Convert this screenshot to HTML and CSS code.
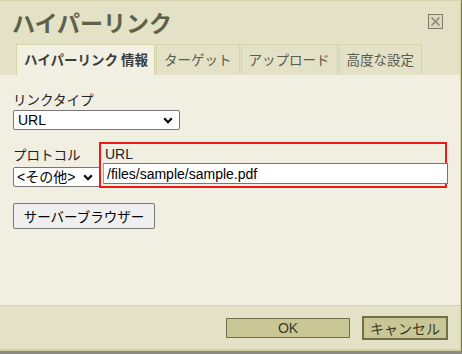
FILE: index.html
```html
<!DOCTYPE html>
<html lang="ja">
<head>
  <meta charset="UTF-8" />
  <meta name="viewport" content="width=device-width, initial-scale=1.0"/>
  <title>ハイパーリンク</title>
  <link rel="stylesheet" href="styles.css">
</head>
<body>
  <div class="dialog">
    <div class="titlebar">
      <span class="title">ハイパーリンク</span>
      <span class="close">
        <svg width="11" height="11" viewBox="0 0 11 11">
          <path d="M1.5 1.5 L9.5 9.5 M9.5 1.5 L1.5 9.5" stroke="#8a8a70" stroke-width="1.6" fill="none"/>
        </svg>
      </span>
    </div>

    <div class="tabs">
      <div class="tab active">ハイパーリンク 情報</div>
      <div class="tab">ターゲット</div>
      <div class="tab">アップロード</div>
      <div class="tab">高度な設定</div>
    </div>

    <div class="content">
      <div class="label">リンクタイプ</div>
      <select class="linktype">
        <option>URL</option>
      </select>

      <div class="urlrow">
        <div class="protocol">
          <div class="label">プロトコル</div>
          <select class="protosel">
            <option>&lt;その他&gt;</option>
          </select>
        </div>
        <div class="urlbox">
          <div class="label urllabel">URL</div>
          <input class="urlinput" type="text" value="/files/sample/sample.pdf" />
        </div>
      </div>

      <button class="browse">サーバーブラウザー</button>
    </div>

    <div class="footer">
      <button class="btn ok">OK</button>
      <button class="btn cancel">キャンセル</button>
    </div>
  </div>
</body>
</html>
```

FILE: styles.css
```css
body {
  margin: 0;
  background: #8a8a80;
  font-family: "Liberation Sans", "Noto Sans CJK JP", sans-serif;
}

.dialog {
  width: 460px;
  background: #e3e1c6;
  border-top: 1px solid #d6d4ae;
  border-right: 1px solid #d3d1a0;
  border-bottom: 2px solid #d3d1a0;
  box-shadow: 0 3px 2px rgba(0, 0, 0, 0.45);
}

.titlebar {
  height: 43px;
  display: flex;
  align-items: center;
  justify-content: space-between;
  padding: 0 17px 0 12px;
}

.title {
  font-family: "Noto Sans CJK JP", sans-serif;
  font-size: 23px;
  font-weight: bold;
  color: #606049;
  margin-top: -1px;
}

.close {
  width: 13px;
  height: 13px;
  border: 1px solid #7d7d66;
  background: #dcdac4;
  display: flex;
  align-items: center;
  justify-content: center;
  margin-top: -2px;
}

.tabs {
  display: flex;
  gap: 1px;
  padding-left: 16px;
  height: 31px;
}

.tab {
  height: 30px;
  padding: 0 7px;
  border: 1px solid #d6d4a6;
  border-bottom: none;
  font-family: "Noto Sans CJK JP", sans-serif;
  font-size: 13.5px;
  color: #5a5a50;
  line-height: 29px;
  box-sizing: border-box;
}

.tab.active {
  height: 31px;
  background: #f1f0e2;
  font-weight: bold;
  color: #3c3c3c;
  padding: 0 6px 0 7px;
}

.content {
  height: 230px;
  background: #f0efe1;
  padding: 14px 13px 0;
  box-sizing: border-box;
}

.label {
  font-family: "Noto Sans CJK JP", sans-serif;
  font-size: 13.5px;
  color: #222;
  line-height: 20px;
}

select {
  appearance: none;
  font-family: "Liberation Sans", "Noto Sans CJK JP", sans-serif;
  font-size: 14px;
  color: #000;
  height: 20px;
  border: 1px solid #767676;
  border-radius: 2px;
  background: #fff url("data:image/svg+xml,%3Csvg xmlns='http://www.w3.org/2000/svg' width='10' height='7' viewBox='0 0 10 7'%3E%3Cpath d='M1.2 1.3 L5 5.2 L8.8 1.3' stroke='%23000' stroke-width='2.2' fill='none'/%3E%3C/svg%3E") no-repeat right 6px center;
  padding: 0 18px 0 4px;
}

.linktype {
  width: 167px;
  margin-top: 1px;
}

.urlrow {
  display: flex;
  align-items: flex-end;
  margin-top: 12px;
}

.protocol {
  width: 86px;
  margin-bottom: 1px;
}

.protocol .label {
  margin-bottom: 3px;
}

.protosel {
  width: 87px;
  padding-left: 3px;
}

.urlbox {
  width: 344px;
  border: 2px solid #f01818;
  padding: 2px 0 2px 2px;
}

.urllabel {
  font-family: "Liberation Sans", sans-serif;
  font-size: 14px;
  line-height: 17px;
  padding-left: 2px;
}

.urlinput {
  display: block;
  width: 345px;
  height: 21px;
  margin-right: -3px;
  box-sizing: border-box;
  border: 1px solid #767676;
  border-left-color: #a0a0a0;
  padding: 0 3px;
  font-family: "Liberation Sans", sans-serif;
  font-size: 14px;
  color: #000;
  background: #fff;
}

.browse {
  margin-top: 15px;
  width: 142px;
  height: 26px;
  background: #efefef;
  border: 1px solid #767676;
  border-radius: 2px;
  font-family: "Noto Sans CJK JP", sans-serif;
  font-size: 13.5px;
  color: #000;
  padding: 0;
}

.footer {
  height: 43px;
  border-top: 1px solid #d6d4a6;
  display: flex;
  align-items: center;
  justify-content: flex-end;
  gap: 12px;
  padding-right: 12px;
}

.btn {
  background: #c9c795;
  border: 1px solid #6f6f4e;
  font-family: "Liberation Sans", "Noto Sans CJK JP", sans-serif;
  font-size: 14px;
  color: #3a3a2a;
  padding: 0;
}

.ok {
  width: 124px;
  height: 20px;
}

.cancel {
  width: 86px;
  height: 24px;
  border-width: 2px;
}
```
